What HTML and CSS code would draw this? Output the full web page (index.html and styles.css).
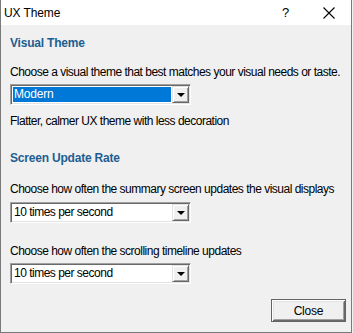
FILE: index.html
```html
<!DOCTYPE html>
<html>
<head>
<meta charset="utf-8">
<link rel="stylesheet" href="styles.css">
</head>
<body>
<div class="window">
  <div class="titlebar">
    <span class="title">UX Theme</span>
    <span class="help">?</span>
    <svg class="close-x" width="12" height="12" viewBox="0 0 12 12"><path d="M0.5 0.5 L11.5 11.5 M11.5 0.5 L0.5 11.5" stroke="#000" stroke-width="1.1" fill="none"/></svg>
  </div>
  <div class="content">
    <div class="heading h1">Visual Theme</div>
    <div class="label l1">Choose a visual theme that best matches your visual needs or taste.</div>
    <div class="combo c1">
      <div class="field selected">Modern</div>
      <div class="arrow"><span class="tri"></span></div>
    </div>
    <div class="label l2">Flatter, calmer UX theme with less decoration</div>
    <div class="heading h2">Screen Update Rate</div>
    <div class="label l3">Choose how often the summary screen updates the visual displays</div>
    <div class="combo c2">
      <div class="field">10 times per second</div>
      <div class="arrow"><span class="tri"></span></div>
    </div>
    <div class="label l4">Choose how often the scrolling timeline updates</div>
    <div class="combo c3">
      <div class="field">10 times per second</div>
      <div class="arrow"><span class="tri"></span></div>
    </div>
    <div class="footer">
      <button class="btn">Close</button>
    </div>
  </div>
</div>
</body>
</html>
```

FILE: styles.css
```css
html, body {
  margin: 0;
  padding: 0;
  background: #f0f0f0;
}
body {
  width: 353px;
  height: 333px;
  overflow: hidden;
  font-family: "Liberation Sans", Arial, sans-serif;
  font-size: 12px;
  color: #000;
}
.window {
  width: 352px;
  height: 333px;
  box-sizing: border-box;
  border-left: 1px solid #7a7a7a;
  border-right: 1px solid #7a7a7a;
  border-bottom: 1px solid #7a7a7a;
  display: flex;
  flex-direction: column;
  background: #f0f0f0;
}
.titlebar {
  height: 25px;
  flex: none;
  background: #fff;
  display: flex;
  align-items: center;
  position: relative;
}
.title {
  margin-left: 3px;
  font-size: 12px;
  letter-spacing: -0.1px;
}
.help {
  position: absolute;
  left: 281px;
  top: 5px;
  font-size: 13px;
}
.close-x {
  position: absolute;
  left: 322px;
  top: 7px;
}
.content {
  flex: 1;
  display: flex;
  flex-direction: column;
  padding: 0 0 0 9px;
}
.heading {
  font-weight: bold;
  color: #1d5e91;
  font-size: 12px;
  line-height: 15px;
  letter-spacing: -0.2px;
}
.label {
  line-height: 15px;
  font-size: 12px;
  letter-spacing: -0.5px;
  white-space: nowrap;
}
.h1 { margin-top: 11px; }
.l1 { margin-top: 14px; }
.c1 { margin-top: 4px; }
.l2 { margin-top: 9px; }
.h2 { margin-top: 22px; }
.l3 { margin-top: 16px; }
.c2 { margin-top: 5px; }
.l4 { margin-top: 21px; }
.c3 { margin-top: 4px; }
.combo {
  width: 181px;
  height: 21px;
  box-sizing: border-box;
  border-top: 1px solid #a0a0a0;
  border-left: 1px solid #a0a0a0;
  border-right: 1px solid #ffffff;
  border-bottom: 1px solid #ffffff;
  box-shadow: inset 1px 1px 0 #696969, inset -1px -1px 0 #e3e3e3;
  padding: 1px;
  display: flex;
  background: #fff;
}
.field {
  flex: 1;
  line-height: 17px;
  padding-left: 2px;
  white-space: nowrap;
  letter-spacing: -0.5px;
}
.field.selected {
  background: #0078d7;
  color: #fff;
  margin: 1px;
  line-height: 15px;
  padding-left: 1px;
  letter-spacing: -0.2px;
}
.arrow {
  width: 17px;
  height: 17px;
  box-sizing: border-box;
  background: #f0f0f0;
  border-top: 1px solid #e3e3e3;
  border-left: 1px solid #e3e3e3;
  border-right: 1px solid #696969;
  border-bottom: 1px solid #696969;
  box-shadow: inset 1px 1px 0 #ffffff, inset -1px -1px 0 #a0a0a0;
  display: flex;
  align-items: center;
  justify-content: center;
}
.tri {
  width: 0;
  height: 0;
  border-left: 4px solid transparent;
  border-right: 4px solid transparent;
  border-top: 4px solid #000;
  margin-top: 1px;
}
.footer {
  margin-top: auto;
  display: flex;
  justify-content: flex-end;
  padding: 0 5px 10px 0;
}
.btn {
  width: 75px;
  height: 23px;
  box-sizing: border-box;
  font-family: "Liberation Sans", Arial, sans-serif;
  font-size: 12px;
  color: #000;
  background: #f0f0f0;
  border: 1px solid #646464;
  box-shadow: inset 1px 1px 0 #ffffff, inset -1px -1px 0 #696969, inset 2px 2px 0 #e3e3e3, inset -2px -2px 0 #a0a0a0;
  padding: 0;
  letter-spacing: -0.2px;
}
```
